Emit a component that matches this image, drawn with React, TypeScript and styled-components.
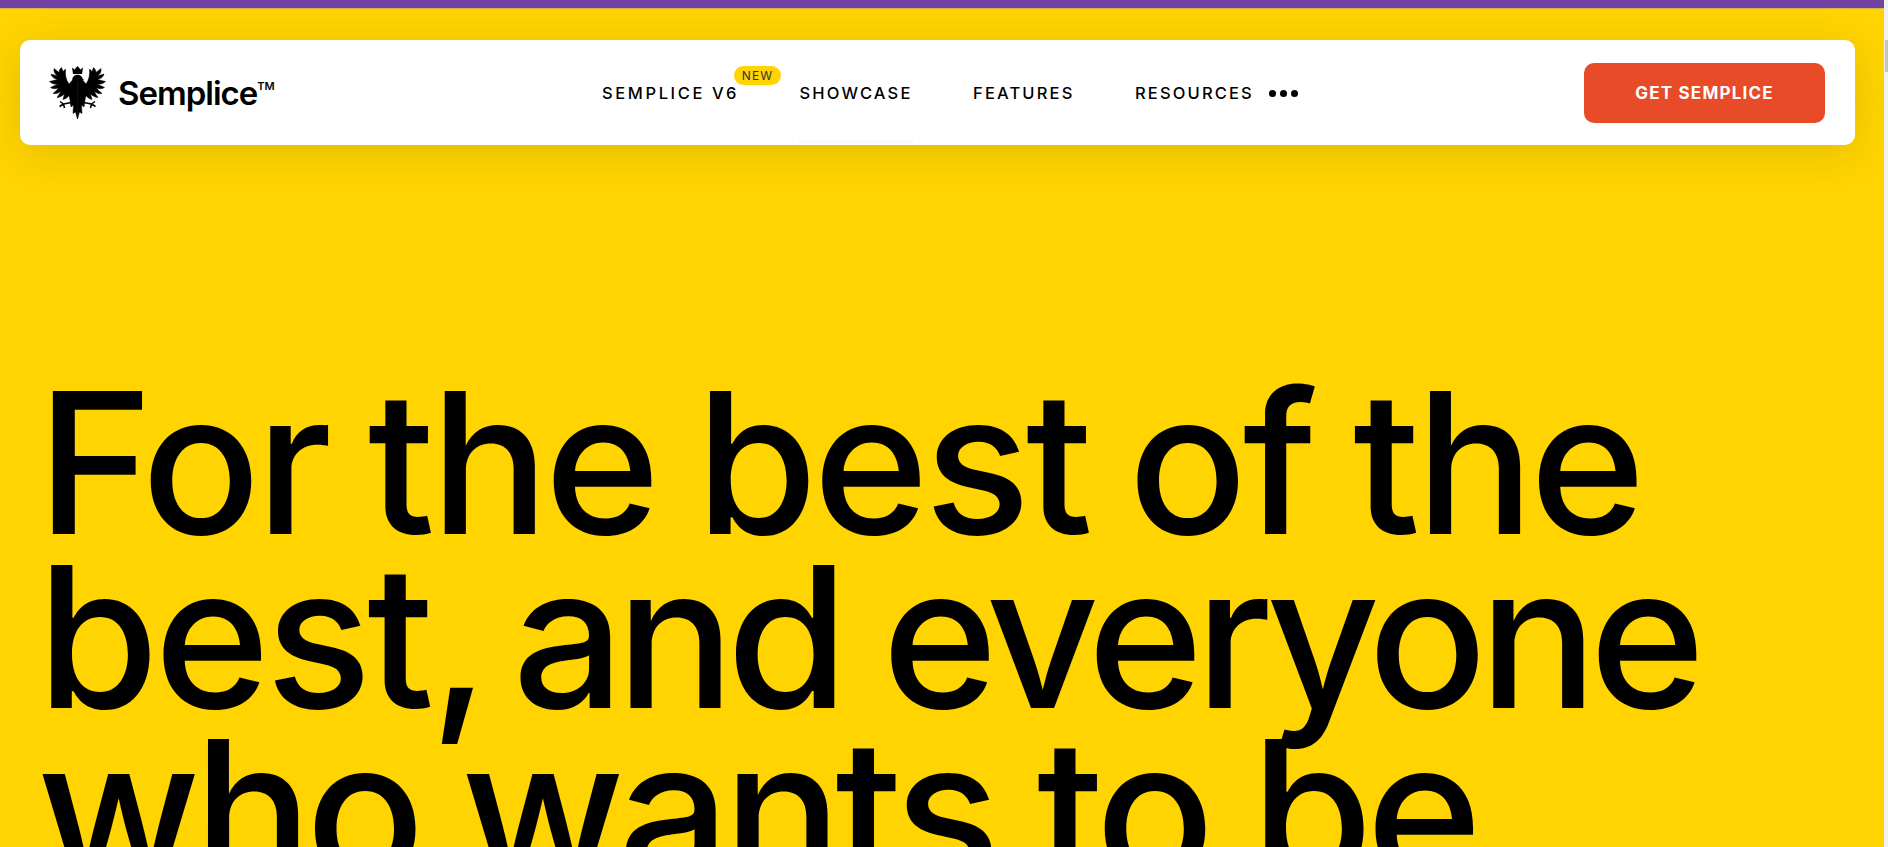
import styled, { createGlobalStyle } from "styled-components";

const GlobalStyle = createGlobalStyle`
  html, body {
    margin: 0;
    height: 100%;
    overflow: hidden;
    background: #f1f1f1;
    font-family: "Inter", "Liberation Sans", sans-serif;
  }
`;

const Shell = styled.div`
  display: flex;
  height: 847px;
  overflow: hidden;
`;

const Page = styled.main`
  width: 1884px;
  flex: none;
  overflow: hidden;
  background: #ffd400;
`;

const Scrollbar = styled.div`
  flex: 1;
  padding-top: 40px;
  display: flex;
  justify-content: flex-end;
`;

const Thumb = styled.div`
  width: 3px;
  height: 32px;
  background: #c4c4c4;
`;

const TopBar = styled.div`
  height: 8px;
  background: #6f42a3;
  border-bottom: 1px solid #d8b24a;
`;

const HeaderWrap = styled.div`
  padding: 31px 29px 0 20px;
`;

const Header = styled.header`
  height: 105px;
  background: #fff;
  border-radius: 10px;
  box-shadow: 0 8px 40px rgba(120, 90, 0, 0.2);
  display: grid;
  grid-template-columns: 553px auto 1fr;
  align-items: center;
  padding: 0 30px 0 29px;
`;

const Brand = styled.div`
  display: flex;
  align-items: center;
  gap: 12px;
`;

const Wordmark = styled.span`
  font-size: 33px;
  font-weight: 600;
  letter-spacing: -1px;
  color: #000;

  sup {
    font-size: 11px;
    letter-spacing: 0;
    vertical-align: 15px;
    line-height: 0;
  }
`;

const Nav = styled.nav`
  display: flex;
  align-items: center;
  gap: 60.5px;
`;

const NavItem = styled.a<{ $active?: boolean; $wide?: boolean }>`
  position: relative;
  font-size: 16.5px;
  font-weight: 500;
  letter-spacing: ${(p) => (p.$wide ? "2.6px" : "2.15px")};
  color: #000;

  &::after {
    content: "";
    display: ${(p) => (p.$active ? "block" : "none")};
    position: absolute;
    left: 0;
    right: 0;
    top: 57px;
    height: 4px;
    background: #f8f8f8;
  }
`;

const Badge = styled.span`
  position: absolute;
  right: -42px;
  top: -17px;
  width: 47px;
  height: 19px;
  border-radius: 10px;
  background: #ffd400;
  color: #333;
  font-size: 12px;
  font-weight: 400;
  letter-spacing: 1.2px;
  line-height: 19px;
  text-align: center;
`;

const More = styled.span`
  display: inline-flex;
  gap: 4px;
  margin-left: 15px;
  vertical-align: 2px;

  i {
    width: 7px;
    height: 7px;
    border-radius: 50%;
    background: #000;
  }
`;

const CtaCell = styled.div`
  display: flex;
  justify-content: flex-end;
`;

const Cta = styled.button`
  width: 241px;
  height: 60px;
  border: 0;
  border-radius: 10px;
  background: #e84b28;
  color: #fff;
  font-family: inherit;
  font-size: 17px;
  font-weight: 700;
  letter-spacing: 1.2px;
`;

const Headline = styled.h1`
  margin: 231px 0 0 37px;
  font-size: 197px;
  line-height: 174px;
  font-weight: 500;
  letter-spacing: -4.5px;
  word-spacing: -8px;
  color: #000;
  white-space: nowrap;
`;

// the reference face sets tighter than Inter on some runs
const Tight = styled.span<{ $spacing: number; $pull?: number }>`
  letter-spacing: ${(p) => p.$spacing}px;
  margin-left: ${(p) => p.$pull ?? 0}px;
  word-spacing: -3px;
`;

const half =
  "M28 9C25 9 23 11 23 14L19.500 18C16.500 14 15.500 9 16 3L13.500 5.500L12 1.500C10.500 3 9.500 4 9.500 6.500L4.500 2.500C4 5 5 8 8 10L1.500 8C2 10.500 4 12.500 8 13.500L0 15.500C2 17.500 5 18.500 8.500 18L1 21.500C3.500 23 6 23 9.500 22L3.500 27.500C6.500 28 9 27 11.500 25.500L7.500 31.500C10 31.500 12.500 30 15 28L13.500 33.500C16 33 18 31.500 19.500 29.500L20.500 34L21.500 41L24 39L23.500 47.500L26 46L28 53Z";

const talon = "M22 36.500L14 38M14 38L10.500 35.500M14 38L10 40.500M14 38L15 42";

const EagleSide = () => (
  <>
    <path d={half} stroke="#000" strokeWidth="0.500" />
    <path d={talon} fill="none" stroke="#000" strokeWidth="1.500" />
  </>
);

const Eagle = () => (
  <svg width="57" height="53" viewBox="0 0 56 53" fill="#000">
    <EagleSide />
    <g transform="translate(56 0) scale(-1 1)">
      <EagleSide />
    </g>
    <path d="M22.500 1.500L25 3.500L28 0L31 3.500L33.500 1.500L32.500 8H23.500Z" />
    <path d="M31 12L35 14L31 15Z" />
  </svg>
);

export default function App() {
  return (
    <Shell>
      <GlobalStyle />
      <Page>
        <TopBar />
        <HeaderWrap>
          <Header>
            <Brand>
              <Eagle />
              <Wordmark>
                Semplice<sup>TM</sup>
              </Wordmark>
            </Brand>
            <Nav>
              <NavItem $wide>
                SEMPLICE V6<Badge>NEW</Badge>
              </NavItem>
              <NavItem $active>SHOWCASE</NavItem>
              <NavItem>FEATURES</NavItem>
              <NavItem>
                RESOURCES
                <More>
                  <i />
                  <i />
                  <i />
                </More>
              </NavItem>
            </Nav>
            <CtaCell>
              <Cta>GET SEMPLICE</Cta>
            </CtaCell>
          </Header>
        </HeaderWrap>
        <Headline>
          For the best of the
          <br />
          best,
          <Tight $spacing={-8} $pull={-14}>
            {" "}
            and everyone
          </Tight>
          <br />
          <Tight $spacing={-6.5}>who wants to be</Tight>
        </Headline>
      </Page>
      <Scrollbar>
        <Thumb />
      </Scrollbar>
    </Shell>
  );
}
